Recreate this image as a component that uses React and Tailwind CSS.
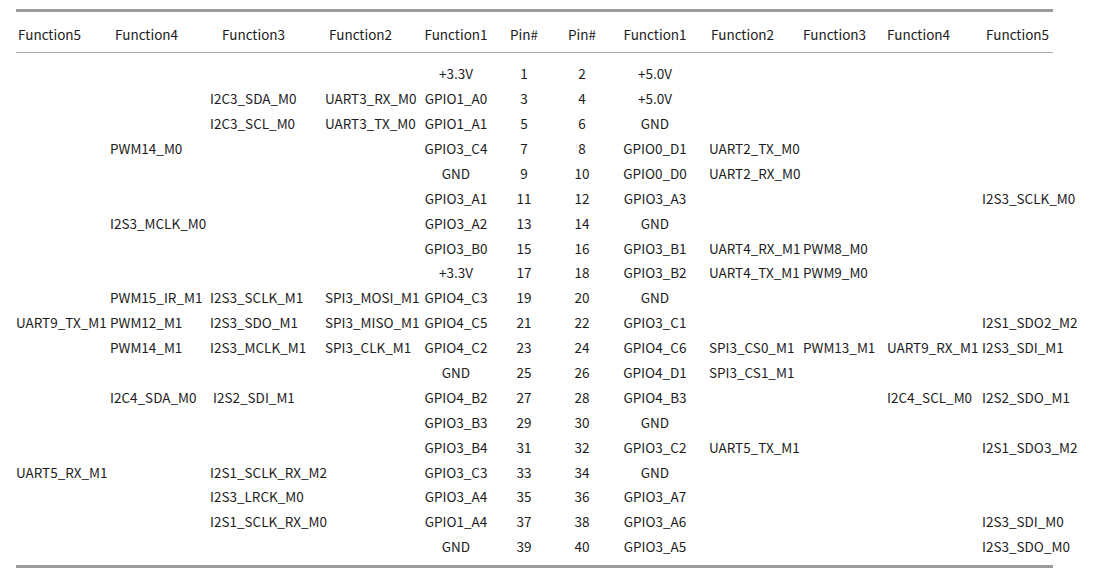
import React from 'react';

const headers = [
  { t: 'Function5', c: 'pl-[2px]' },
  { t: 'Function4', c: 'pl-[5px]' },
  { t: 'Function3', c: 'pl-[12px]' },
  { t: 'Function2', c: 'pl-[4px]' },
  { t: 'Function1', c: 'text-center' },
  { t: 'Pin#', c: 'text-center' },
  { t: 'Pin#', c: 'text-center' },
  { t: 'Function1', c: 'text-center' },
  { t: 'Function2', c: 'pl-[7px]' },
  { t: 'Function3', c: '' },
  { t: 'Function4', c: '' },
  { t: 'Function5', c: 'pl-[4px]' },
];

// left: F5 F4 F3 F2 F1 pin | right: pin F1 F2 F3 F4 F5
const rows = [
  ['', '', '', '', '+3.3V', '1', '2', '+5.0V', '', '', '', ''],
  ['', '', 'I2C3_SDA_M0', 'UART3_RX_M0', 'GPIO1_A0', '3', '4', '+5.0V', '', '', '', ''],
  ['', '', 'I2C3_SCL_M0', 'UART3_TX_M0', 'GPIO1_A1', '5', '6', 'GND', '', '', '', ''],
  ['', 'PWM14_M0', '', '', 'GPIO3_C4', '7', '8', 'GPIO0_D1', 'UART2_TX_M0', '', '', ''],
  ['', '', '', '', 'GND', '9', '10', 'GPIO0_D0', 'UART2_RX_M0', '', '', ''],
  ['', '', '', '', 'GPIO3_A1', '11', '12', 'GPIO3_A3', '', '', '', 'I2S3_SCLK_M0'],
  ['', 'I2S3_MCLK_M0', '', '', 'GPIO3_A2', '13', '14', 'GND', '', '', '', ''],
  ['', '', '', '', 'GPIO3_B0', '15', '16', 'GPIO3_B1', 'UART4_RX_M1', 'PWM8_M0', '', ''],
  ['', '', '', '', '+3.3V', '17', '18', 'GPIO3_B2', 'UART4_TX_M1', 'PWM9_M0', '', ''],
  ['', 'PWM15_IR_M1', 'I2S3_SCLK_M1', 'SPI3_MOSI_M1', 'GPIO4_C3', '19', '20', 'GND', '', '', '', ''],
  ['UART9_TX_M1', 'PWM12_M1', 'I2S3_SDO_M1', 'SPI3_MISO_M1', 'GPIO4_C5', '21', '22', 'GPIO3_C1', '', '', '', 'I2S1_SDO2_M2'],
  ['', 'PWM14_M1', 'I2S3_MCLK_M1', 'SPI3_CLK_M1', 'GPIO4_C2', '23', '24', 'GPIO4_C6', 'SPI3_CS0_M1', 'PWM13_M1', 'UART9_RX_M1', 'I2S3_SDI_M1'],
  ['', '', '', '', 'GND', '25', '26', 'GPIO4_D1', 'SPI3_CS1_M1', '', '', ''],
  ['', 'I2C4_SDA_M0', ' I2S2_SDI_M1', '', 'GPIO4_B2', '27', '28', 'GPIO4_B3', '', '', 'I2C4_SCL_M0', 'I2S2_SDO_M1'],
  ['', '', '', '', 'GPIO3_B3', '29', '30', 'GND', '', '', '', ''],
  ['', '', '', '', 'GPIO3_B4', '31', '32', 'GPIO3_C2', 'UART5_TX_M1', '', '', 'I2S1_SDO3_M2'],
  ['UART5_RX_M1', '', 'I2S1_SCLK_RX_M2', '', 'GPIO3_C3', '33', '34', 'GND', '', '', '', ''],
  ['', '', 'I2S3_LRCK_M0', '', 'GPIO3_A4', '35', '36', 'GPIO3_A7', '', '', '', ''],
  ['', '', 'I2S1_SCLK_RX_M0', '', 'GPIO1_A4', '37', '38', 'GPIO3_A6', '', '', '', 'I2S3_SDI_M0'],
  ['', '', '', '', 'GND', '39', '40', 'GPIO3_A5', '', '', '', 'I2S3_SDO_M0'],
];

const cellCls = [
  '', '', '', '',
  'text-center', 'text-center', 'text-center', 'text-center',
  'pl-[5px]', '', '', '',
];

const gridCols =
  'grid grid-cols-[94px_100px_115px_97px_68px_68px_48px_98px_99px_84px_95px_71px]';

export default function App() {
  return (
    <div
      className="w-[1099px] h-[581px] bg-white text-[#1c1c1c] text-[13.5px] pt-[9px] pl-[16px]"
      style={{ fontFamily: '"Noto Sans CJK SC", "Noto Sans", sans-serif' }}
    >
      <div className="w-[1037px]">
        <div className="border-t-[3px] border-[#9c9c9c]" />
        <div className={`${gridCols} h-[41px] pt-[4px] items-center border-b border-[#a8a8a8] whitespace-nowrap`}>
          {headers.map((h, i) => (
            <div key={i} className={h.c}>{h.t}</div>
          ))}
        </div>
        <div className="pt-[8px] pb-[6px]">
          {rows.map((r, ri) => (
            <div key={ri} className={`${gridCols} h-[24.9px] items-center whitespace-pre`}>
              {r.map((c, ci) => (
                <div key={ci} className={cellCls[ci]}>{c}</div>
              ))}
            </div>
          ))}
        </div>
        <div className="border-t-[3px] border-[#9c9c9c]" />
      </div>
    </div>
  );
}
